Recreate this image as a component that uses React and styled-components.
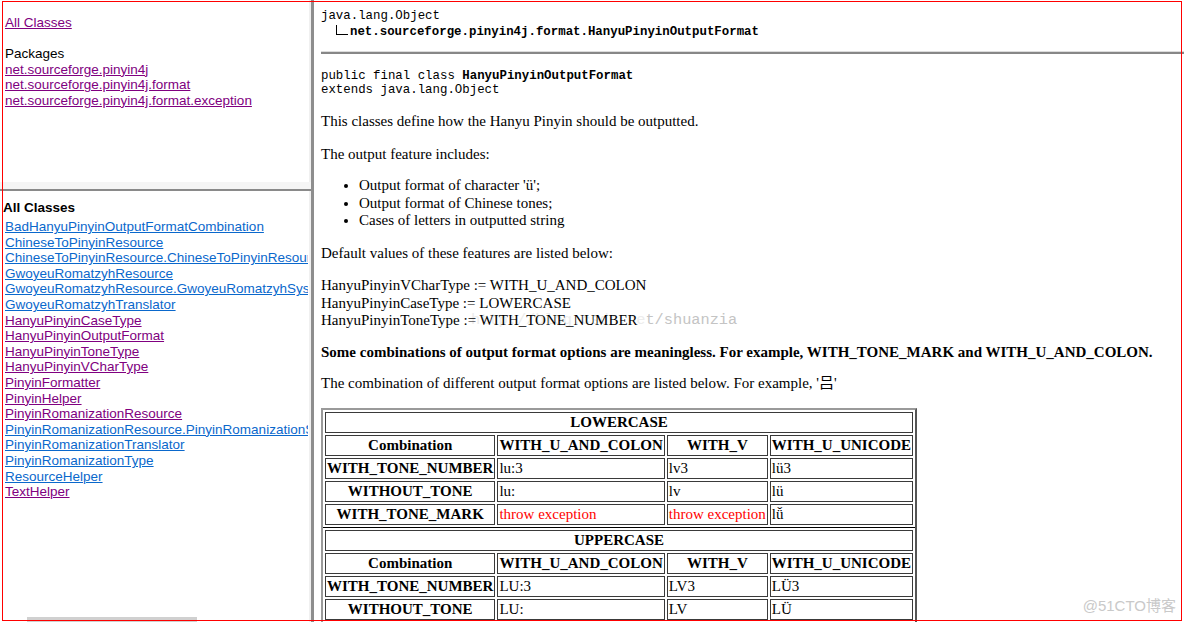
import React from "react"
import styled, { createGlobalStyle } from "styled-components"

const GlobalStyle = createGlobalStyle`
  html, body {
    margin: 0;
    padding: 0;
    background: #fff;
    overflow: hidden;
  }
`

const Page = styled.div`
  position: relative;
  display: flex;
  width: 1184px;
  height: 622px;
  overflow: hidden;
  background: #fff;
`

const RedFrame = styled.div`
  position: absolute;
  left: 2px;
  top: 1px;
  width: 1180px;
  height: 620px;
  box-sizing: border-box;
  border: 1px solid #ff0000;
  pointer-events: none;
  z-index: 5;
`

const LeftColumn = styled.div`
  width: 311px;
  flex: none;
  display: flex;
  flex-direction: column;
  border-right: 3px solid #8e8e8e;
  font-family: "Liberation Sans", Arial, sans-serif;
  font-size: 13.5px;
  line-height: 15.6px;
`

const PackageFrame = styled.div`
  height: 191px;
  flex: none;
  box-sizing: border-box;
  padding: 15px 0 0 5px;
  border-bottom: 2px solid #8a8a8a;
  box-shadow: inset 0 -7px 0 #f5f5f5, inset -2px 0 0 #f0f0f0;
  overflow: hidden;
  white-space: nowrap;
`

const ClassFrame = styled.div`
  flex: 1;
  display: flex;
  flex-direction: column;
  min-height: 0;
  padding-top: 9px;
  box-shadow: inset -2px 0 0 #f0f0f0;
  overflow: hidden;
  white-space: nowrap;
`

const Spacer = styled.div`
  height: 15.6px;
`

const Label = styled.div`
  color: #000;
`

const FrameTitle = styled.div`
  padding-left: 3px;
  font-weight: bold;
  color: #000;
`

const ClassList = styled.div`
  flex: 1;
  margin: 3.5px 3px 0 0;
  padding-left: 5px;
  overflow: hidden;
`

const NavLink = styled.a`
  display: block;
  width: max-content;
  color: ${(p) => (p.$visited ? "#800080" : "#0a68cc")};
  text-decoration: underline;
  cursor: pointer;
`

const ScrollTrack = styled.div`
  height: 5px;
  flex: none;
  padding-left: 27px;
`

const ScrollThumb = styled.div`
  width: 170px;
  height: 100%;
  background: #d0d0d0;
`

const DocFrame = styled.div`
  position: relative;
  flex: 1;
  min-width: 0;
  padding-left: 7px;
  overflow: hidden;
  font-family: "Liberation Serif", "Times New Roman", "Noto Sans CJK SC", serif;
  font-size: 15px;
  line-height: 17.5px;
  color: #000;
`

const Content = styled.div`
  position: relative;
  z-index: 1;
`

const Code = styled.pre`
  margin: ${(p) => p.$top}px 0 0;
  font-family: "Liberation Mono", "Courier New", monospace;
  font-size: 12.4px;
  line-height: ${(p) => p.$lh}px;
  white-space: pre;
`

const TreeBranch = styled.span`
  display: inline-block;
  width: 12px;
  height: 10px;
  margin: 0 2px 0 15px;
  border-left: 1px solid #000;
  border-bottom: 1px solid #000;
  box-sizing: border-box;
`

const Rule = styled.hr`
  margin: 11px 0 0;
  height: 0;
  border: 0;
  border-top: 1px solid #dcdcdc;
  border-bottom: 2px solid #878787;
`

const Para = styled.p`
  margin: ${(p) => p.$gap ?? 15}px 0 0;
  font-weight: ${(p) => (p.$bold ? "bold" : "normal")};
  white-space: nowrap;
`

const Bullets = styled.ul`
  margin: 14px 0 0;
  padding-left: 38px;
  list-style: disc;
`

const TableBox = styled.div`
  display: inline-block;
  margin-top: 15px;
  border: 2px solid;
  border-color: #9a9a9a #555 #555 #9a9a9a;
`

const Grid = styled.table`
  width: 100%;
  border-collapse: separate;
  border-spacing: 2px;
  border-bottom: ${(p) => (p.$divider ? "1px solid #000" : "0")};
  font-size: 15px;
  line-height: 17px;
`

const HeadCell = styled.th`
  padding: 1px;
  border: 1px solid #3a3a3a;
  font-weight: bold;
  text-align: center;
  white-space: nowrap;
`

const Cell = styled.td`
  padding: 1px;
  border: 1px solid #3a3a3a;
  text-align: left;
  white-space: nowrap;
  color: ${(p) => (p.$error ? "#ff0000" : "#000")};
`

const BlogMark = styled.div`
  position: absolute;
  left: 157px;
  top: 311px;
  z-index: 0;
  font-family: "Liberation Mono", "Courier New", monospace;
  font-size: 15.3px;
  line-height: 18px;
  white-space: nowrap;
`

const MarkPart = styled.span`
  color: ${(p) => (p.$faint ? "#ececec" : "#c4c4c4")};
`

const SiteMark = styled.div`
  position: absolute;
  right: 8px;
  top: 596px;
  z-index: 6;
  font-family: "Liberation Sans", "Noto Sans CJK SC", sans-serif;
  font-size: 15px;
  line-height: 20px;
  color: #c9c9c9;
`

const packages = [
  "net.sourceforge.pinyin4j",
  "net.sourceforge.pinyin4j.format",
  "net.sourceforge.pinyin4j.format.exception",
]

const classes = [
  ["BadHanyuPinyinOutputFormatCombination", false],
  ["ChineseToPinyinResource", false],
  ["ChineseToPinyinResource.ChineseToPinyinResourceSystemProperties", false],
  ["GwoyeuRomatzyhResource", false],
  ["GwoyeuRomatzyhResource.GwoyeuRomatzyhSystemProperties", false],
  ["GwoyeuRomatzyhTranslator", false],
  ["HanyuPinyinCaseType", true],
  ["HanyuPinyinOutputFormat", true],
  ["HanyuPinyinToneType", true],
  ["HanyuPinyinVCharType", true],
  ["PinyinFormatter", true],
  ["PinyinHelper", true],
  ["PinyinRomanizationResource", true],
  ["PinyinRomanizationResource.PinyinRomanizationSystemProperties", false],
  ["PinyinRomanizationTranslator", false],
  ["PinyinRomanizationType", false],
  ["ResourceHelper", false],
  ["TextHelper", true],
]

const ERR = "throw exception"

const sections = [
  {
    title: "LOWERCASE",
    rows: [
      ["WITH_TONE_NUMBER", "lu:3", "lv3", "lü3"],
      ["WITHOUT_TONE", "lu:", "lv", "lü"],
      ["WITH_TONE_MARK", ERR, ERR, "lǚ"],
    ],
  },
  {
    title: "UPPERCASE",
    rows: [
      ["WITH_TONE_NUMBER", "LU:3", "LV3", "LÜ3"],
      ["WITHOUT_TONE", "LU:", "LV", "LÜ"],
      ["WITH_TONE_MARK", ERR, ERR, "LǙ"],
    ],
  },
]

const columns = ["Combination", "WITH_U_AND_COLON", "WITH_V", "WITH_U_UNICODE"]

const ComboTable = ({ title, rows, divider }) => (
  <Grid $divider={divider}>
    <tbody>
      <tr>
        <HeadCell colSpan={4}>{title}</HeadCell>
      </tr>
      <tr>
        {columns.map((c) => (
          <HeadCell key={c}>{c}</HeadCell>
        ))}
      </tr>
      {rows.map(([name, ...values]) => (
        <tr key={name}>
          <HeadCell>{name}</HeadCell>
          {values.map((v, i) => (
            <Cell key={i} $error={v === ERR}>
              {v}
            </Cell>
          ))}
        </tr>
      ))}
    </tbody>
  </Grid>
)

const App = () => (
  <Page>
    <GlobalStyle />
    <LeftColumn>
      <PackageFrame>
        <NavLink $visited>All Classes</NavLink>
        <Spacer />
        <Label>Packages</Label>
        {packages.map((p) => (
          <NavLink key={p} $visited>
            {p}
          </NavLink>
        ))}
      </PackageFrame>
      <ClassFrame>
        <FrameTitle>All Classes</FrameTitle>
        <ClassList>
          {classes.map(([name, visited]) => (
            <NavLink key={name} $visited={visited}>
              {name}
            </NavLink>
          ))}
        </ClassList>
        <ScrollTrack>
          <ScrollThumb />
        </ScrollTrack>
      </ClassFrame>
    </LeftColumn>

    <DocFrame>
      <BlogMark>
        <MarkPart $faint>http://blog.csdn.ne</MarkPart>
        <MarkPart>t/shuanzia</MarkPart>
      </BlogMark>
      <Content>
        <Code $top={8} $lh={16}>
          {"java.lang.Object\n"}
          <TreeBranch />
          <b>net.sourceforge.pinyin4j.format.HanyuPinyinOutputFormat</b>
        </Code>
        <Rule />
        <Code $top={15} $lh={14}>
          {"public final class "}
          <b>HanyuPinyinOutputFormat</b>
          {"\nextends java.lang.Object"}
        </Code>
        <Para $gap={16}>This classes define how the Hanyu Pinyin should be outputted.</Para>
        <Para>The output feature includes:</Para>
        <Bullets>
          <li>Output format of character 'ü';</li>
          <li>Output format of Chinese tones;</li>
          <li>Cases of letters in outputted string</li>
        </Bullets>
        <Para>Default values of these features are listed below:</Para>
        <Para>
          HanyuPinyinVCharType := WITH_U_AND_COLON
          <br />
          HanyuPinyinCaseType := LOWERCASE
          <br />
          HanyuPinyinToneType := WITH_TONE_NUMBER
        </Para>
        <Para $bold $gap={14.5}>
          Some combinations of output format options are meaningless. For example, WITH_TONE_MARK and
          WITH_U_AND_COLON.
        </Para>
        <Para $gap={13.5}>
          The combination of different output format options are listed below. For example, '吕'
        </Para>
        <TableBox>
          {sections.map((s, i) => (
            <ComboTable key={s.title} title={s.title} rows={s.rows} divider={i === 0} />
          ))}
        </TableBox>
      </Content>
    </DocFrame>

    <SiteMark>@51CTO博客</SiteMark>
    <RedFrame />
  </Page>
)

export default App
